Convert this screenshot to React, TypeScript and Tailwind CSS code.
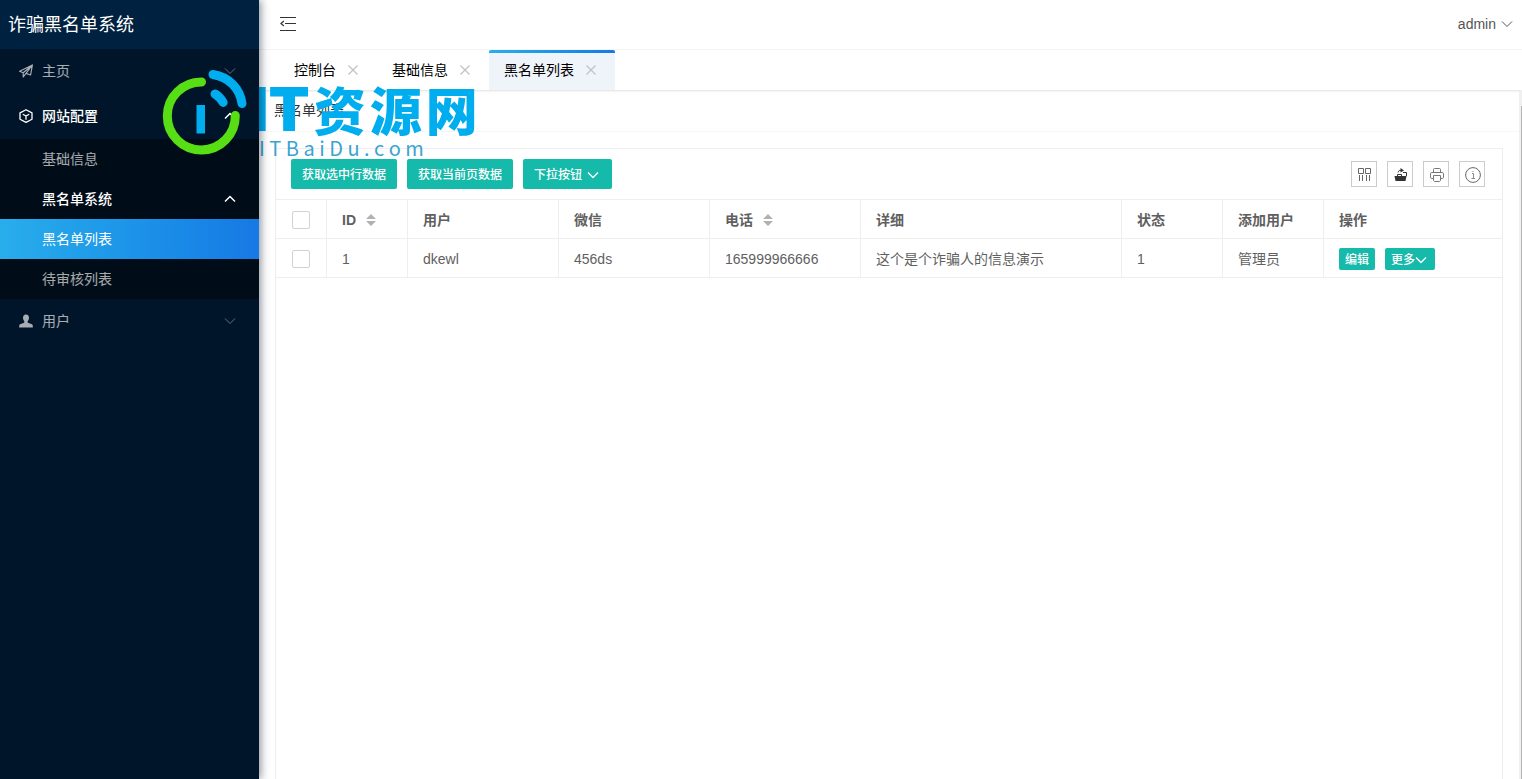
import React from "react";

interface IconProps {
  className?: string;
}

interface MenuLinkProps {
  label: string;
  active?: boolean;
  open?: boolean;
}

const columns = [
  { key: "id", title: "ID", sortable: true },
  { key: "user", title: "用户" },
  { key: "wechat", title: "微信" },
  { key: "phone", title: "电话", sortable: true },
  { key: "detail", title: "详细" },
  { key: "status", title: "状态" },
  { key: "addedBy", title: "添加用户" },
];

const rows = [
  {
    id: "1",
    user: "dkewl",
    wechat: "456ds",
    phone: "165999966666",
    detail: "这个是个诈骗人的信息演示",
    status: "1",
    addedBy: "管理员",
  },
];

const tabs = ["控制台", "基础信息", "黑名单列表"];

const ChevronIcon: React.FC<IconProps & { up?: boolean }> = ({ className, up }) => (
  <svg viewBox="0 0 12 12" className={className} fill="none" stroke="currentColor" aria-hidden="true">
    <path d={up ? "M1 8.500 6 3.500l5 5" : "M1 3.500 6 8.500l5-5"} />
  </svg>
);

const CloseIcon: React.FC<IconProps> = ({ className }) => (
  <svg viewBox="0 0 12 12" className={className} fill="none" stroke="currentColor" strokeWidth="1.3" aria-hidden="true">
    <path d="M1.500 1.500l9 9M10.500 1.500l-9 9" />
  </svg>
);

const ShrinkIcon: React.FC<IconProps> = ({ className }) => (
  <svg viewBox="0 0 16 16" className={className} fill="none" stroke="currentColor" strokeWidth="1.2" aria-hidden="true">
    <path d="M0 1.500h16M5 7.500h11M0 14.500h16M3.800 5 1 7.500l2.800 2.500" />
  </svg>
);

const PlaneIcon: React.FC<IconProps> = ({ className }) => (
  <svg viewBox="0 0 14 14" className={className} fill="none" stroke="currentColor" strokeWidth="1.2" strokeLinejoin="round" aria-hidden="true">
    <path d="M13.400 1 0.600 7.200l3.600 1.600L13.400 1 11.600 11 7 9.400M4.200 8.800v4.200L7 9.400 13.400 1" />
  </svg>
);

const CubeIcon: React.FC<IconProps> = ({ className }) => (
  <svg viewBox="0 0 14 14" className={className} fill="none" stroke="currentColor" strokeWidth="1.3" strokeLinejoin="round" aria-hidden="true">
    <path d="M7 0.700 13 3.900v6.300L7 13.400 1 10.200V3.900zM3.800 5.200 7 7l3.200-1.800M7 7v3.800" />
  </svg>
);

const UserIcon: React.FC<IconProps> = ({ className }) => (
  <svg viewBox="0 0 14 14" className={className} fill="currentColor" aria-hidden="true">
    <path d="M7 0.500c2 0 3 1.400 3 3.300 0 1.400-.6 2.600-1.300 3.500-.2.900 0 1.500.8 1.800l2.800 1c.9.400 1.400.8 1.500 1.700v1.700H.2v-1.700c.1-.9.6-1.300 1.500-1.700l2.800-1c.8-.3 1-.9.800-1.800C4.600 6.400 4 5.200 4 3.800 4 1.900 5 .5 7 .5z" />
  </svg>
);

const SortIcon: React.FC<IconProps> = ({ className }) => (
  <svg viewBox="0 0 10 12" className={className} fill="#b2b2b2" aria-hidden="true">
    <path d="M5 0l5 5H0zM5 12l5-5H0z" />
  </svg>
);

const ColumnsIcon = () => (
  <svg viewBox="0 0 16 16" className="size-4" fill="none" stroke="#666" aria-hidden="true">
    <path d="M1.500 1.500h5v5h-5zM8.500 1.500h5v5h-5zM2.500 8v6M5.500 8v6M9.500 8v6M12.500 8v6" />
  </svg>
);

const ExportIcon = () => (
  <svg viewBox="0 0 16 16" className="size-4" aria-hidden="true">
    <path d="M1.500 9h12l-1 5h-10z" fill="#333" />
    <path d="M4.500 9V7.500h4V9M10 5.500h3.500V9M5 5.500c.4-1.800 1.600-2.300 3.500-2.300" fill="none" stroke="#333" />
    <path d="M7.500 1 11 3.400 7.500 5.500z" fill="#333" />
  </svg>
);

const PrintIcon = () => (
  <svg viewBox="0 0 16 16" className="size-4" fill="none" stroke="#777" aria-hidden="true">
    <path d="M4.500 5V2.500c0-.6.400-1 1-1h5c.6 0 1 .4 1 1V5M4 11.500H2.800c-.8 0-1.300-.5-1.300-1.300V6.800c0-.8.5-1.300 1.300-1.300h10.400c.8 0 1.300.5 1.300 1.300v3.400c0 .8-.5 1.300-1.300 1.300H12M4.500 8.500h7V13c0 .8-.5 1.500-1.300 1.500H5.800c-.8 0-1.300-.7-1.300-1.500z" />
  </svg>
);

const InfoIcon = () => (
  <svg viewBox="0 0 16 16" className="size-4" fill="none" stroke="#666" aria-hidden="true">
    <circle cx="8" cy="8" r="7.400" />
    <path d="M7 6.500h1.500v5M6.500 11.500h3.500M7.500 4.500h1" stroke="#888" />
  </svg>
);

const tools = [
  { label: "筛选列", Icon: ColumnsIcon },
  { label: "导出", Icon: ExportIcon },
  { label: "打印", Icon: PrintIcon },
  { label: "提示", Icon: InfoIcon },
];

const SubMenuLink: React.FC<MenuLinkProps> = ({ label, active, open }) => (
  <a
    href="#"
    className={`flex h-10 items-center justify-between pl-[42px] pr-[23px] ${
      active
        ? "bg-linear-to-r from-[#29aeec] to-[#1779e4] text-white"
        : open
          ? "font-medium text-white"
          : "text-white/65"
    }`}
  >
    {label}
    {open && <ChevronIcon up className="size-3 stroke-[1.5]" />}
  </a>
);

const Sidebar = () => (
  <aside className="relative z-20 w-[259px] shrink-0 bg-[#001529] text-sm text-white/65 shadow-[2px_0_8px_rgba(0,21,41,0.45)]">
    <h1 className="flex h-[49px] items-center bg-[#002140] pl-2 text-lg text-white">诈骗黑名单系统</h1>
    <nav>
      <a href="#" className="flex h-[45px] items-center gap-[9px] pr-[23px] pb-[2px] pl-[19px]">
        <PlaneIcon className="size-[14px]" />
        <span className="flex-1">主页</span>
        <ChevronIcon className="size-3 opacity-60" />
      </a>
      <a href="#" className="flex h-[45px] items-center gap-[9px] pr-[23px] pb-[2px] pl-[19px] font-medium text-white">
        <CubeIcon className="size-[14px]" />
        <span className="flex-1">网站配置</span>
        <ChevronIcon up className="size-3 stroke-[1.5]" />
      </a>
      <div className="bg-[#000c17]">
        <SubMenuLink label="基础信息" />
        <SubMenuLink label="黑名单系统" open />
        <SubMenuLink label="黑名单列表" active />
        <SubMenuLink label="待审核列表" />
      </div>
      <a href="#" className="flex h-[45px] items-center gap-[9px] pr-[23px] pb-[2px] pl-[19px]">
        <UserIcon className="size-[14px]" />
        <span className="flex-1">用户</span>
        <ChevronIcon className="size-3 opacity-60" />
      </a>
    </nav>

    {/* site mark floating over the menu */}
    <svg
      viewBox="160 66 90 92"
      className="pointer-events-none absolute left-[160px] top-[66px] h-[92px] w-[90px]"
      fill="none"
      strokeWidth="9"
      strokeLinecap="round"
      aria-hidden="true"
    >
      <path d="M201.500 82A34 34 0 1 0 235.300 115.500" stroke="#57de14" />
      <path d="M213 74.500C229 77 240 88.500 242 103.500" stroke="#00adee" />
      <path d="M215 94C218.500 96 221 98.800 223.200 102.500" stroke="#00adee" />
      <path d="M196.500 105h8.500v28.500h-8.500z" fill="#00adee" stroke="none" />
    </svg>
  </aside>
);

// sits under the sidebar, so the first letter is partly hidden by it
const Watermark = () => (
  <div className="pointer-events-none absolute left-0 top-[82px] z-10 text-[#00adee]">
    <div className="-ml-2 flex h-[54px] items-center gap-1 whitespace-nowrap">
      <span className="font-['Inter',sans-serif] text-[60px] leading-[54px] font-black">IT</span>
      <span className="flex gap-1 font-['Noto_Sans_CJK_SC',sans-serif] text-[52px] leading-[48px] font-black">
        <span>资</span>
        <span>源</span>
        <span>网</span>
      </span>
    </div>
    <div className="h-6 font-['Noto_Sans_CJK_SC',sans-serif] text-xl leading-6 whitespace-nowrap text-[#3ba3cf]">
      I T B a i D u . c o m
    </div>
  </div>
);

const DataTable = () => (
  <table className="w-full table-fixed border-separate border-spacing-0 border-t border-[#eee] text-left">
    <colgroup>
      <col className="w-[51px]" />
      <col className="w-[81px]" />
      <col className="w-[151px]" />
      <col className="w-[151px]" />
      <col className="w-[151px]" />
      <col className="w-[261px]" />
      <col className="w-[101px]" />
      <col className="w-[101px]" />
      <col />
    </colgroup>
    <thead>
      <tr className="h-[39px]">
        <th className="border-r border-b border-[#eee] pt-[2px] pl-4">
          <input
            type="checkbox"
            aria-label="全选"
            className="block size-[18px] appearance-none rounded-xs border border-[#d2d2d2] bg-white"
          />
        </th>
        {columns.map((col) => (
          <th key={col.key} className="border-r border-b border-[#eee] px-[15px] pt-[2px] font-bold">
            <span className="flex items-center gap-[10px]">
              {col.title}
              {col.sortable && (
                <button aria-label="排序">
                  <SortIcon className="block h-3 w-[10px]" />
                </button>
              )}
            </span>
          </th>
        ))}
        <th className="border-b border-[#eee] px-[15px] pt-[2px] font-bold">操作</th>
      </tr>
    </thead>
    <tbody>
      {rows.map((row) => (
        <tr key={row.id} className="h-[39px]">
          <td className="border-r border-b border-[#eee] pt-[2px] pl-4">
            <input
              type="checkbox"
              aria-label={`选择 ${row.user}`}
              className="block size-[18px] appearance-none rounded-xs border border-[#d2d2d2] bg-white"
            />
          </td>
          {columns.map((col) => (
            <td key={col.key} className="truncate border-r border-b border-[#eee] px-[15px] pt-[2px]">
              {row[col.key as keyof typeof row]}
            </td>
          ))}
          <td className="border-b border-[#eee] px-[15px] pt-[2px]">
            <div className="flex gap-[10px] text-xs font-medium text-white">
              <button className="h-[22px] rounded-xs bg-[#16baaa] px-[6px] pt-[2px]">编辑</button>
              <button className="flex h-[22px] items-center rounded-xs bg-[#16baaa] pt-[2px] pr-2 pl-[6px]">
                更多
                <ChevronIcon className="size-3 stroke-[1.3]" />
              </button>
            </div>
          </td>
        </tr>
      ))}
    </tbody>
  </table>
);

const App: React.FC = () => {
  return (
    <div className="flex min-h-screen bg-white font-['Liberation_Sans','Noto_Sans_CJK_SC',sans-serif] text-sm text-[#5f5f5f]">
      <Sidebar />

      <div className="relative flex min-w-0 flex-1 flex-col">
        <Watermark />

        <header className="flex h-[50px] items-center justify-between border-b border-[#f6f6f6] pr-[9px] pb-[2px] pl-[21px] text-[#333]">
          <button aria-label="收起菜单">
            <ShrinkIcon className="size-4" />
          </button>
          <button className="flex items-center gap-[5px] text-[#555]">
            admin
            <ChevronIcon className="size-3" />
          </button>
        </header>

        <div className="flex h-10 pl-5 text-black shadow-[0_1px_2px_rgba(0,0,0,0.12)]">
          {tabs.map((tab, index) => (
            <div
              key={tab}
              className={`relative flex items-center gap-[11px] pr-[18px] pl-[15px] ${
                index === 2 ? "bg-[#eff4fb]" : ""
              }`}
            >
              {index === 2 && (
                <span className="absolute inset-x-0 top-0 h-[3px] rounded-t-xs bg-linear-to-r from-[#29aeec] to-[#1779e4]" />
              )}
              <a href="#">{tab}</a>
              <button aria-label={`关闭${tab}`} className="text-[#c2c2c2]">
                <CloseIcon className="block size-3" />
              </button>
            </div>
          ))}
        </div>

        <div className="flex flex-1 pt-px">
          <main className="flex min-w-0 flex-1 flex-col">
            <div className="flex h-[41px] items-center border-b border-[#f6f6f6] pb-[2px] pl-[15px] text-[#333]">
              黑名单列表
            </div>

            <section className="mt-4 mr-4 ml-4 flex flex-1 flex-col border border-b-0 border-[#eee]">
              <div className="flex h-[50px] items-center justify-between pr-[17px] pl-[15px]">
                <div className="flex gap-[10px] text-xs font-medium text-white">
                  <button className="h-[30px] rounded-xs bg-[#16baaa] px-[11px] pt-[2px]">获取选中行数据</button>
                  <button className="h-[30px] rounded-xs bg-[#16baaa] px-[11px] pt-[2px]">获取当前页数据</button>
                  <button className="flex h-[30px] items-center gap-[5px] rounded-xs bg-[#16baaa] pt-[2px] pr-[13px] pl-[11px]">
                    下拉按钮
                    <ChevronIcon className="size-3 stroke-[1.3]" />
                  </button>
                </div>
                <div className="flex gap-[10px]">
                  {tools.map(({ label, Icon }) => (
                    <button
                      key={label}
                      aria-label={label}
                      className="flex size-[26px] items-center justify-center border border-[#ccc] pt-[2px] pl-[2px]"
                    >
                      <Icon />
                    </button>
                  ))}
                </div>
              </div>
              <DataTable />
            </section>
          </main>

          {/* scroll track */}
          <div className="flex w-[3px] justify-end bg-[#f0f0f0] pt-[15px]">
            <div className="w-px bg-[#b5b5b5]" />
          </div>
        </div>
      </div>
    </div>
  );
};

export default App;
